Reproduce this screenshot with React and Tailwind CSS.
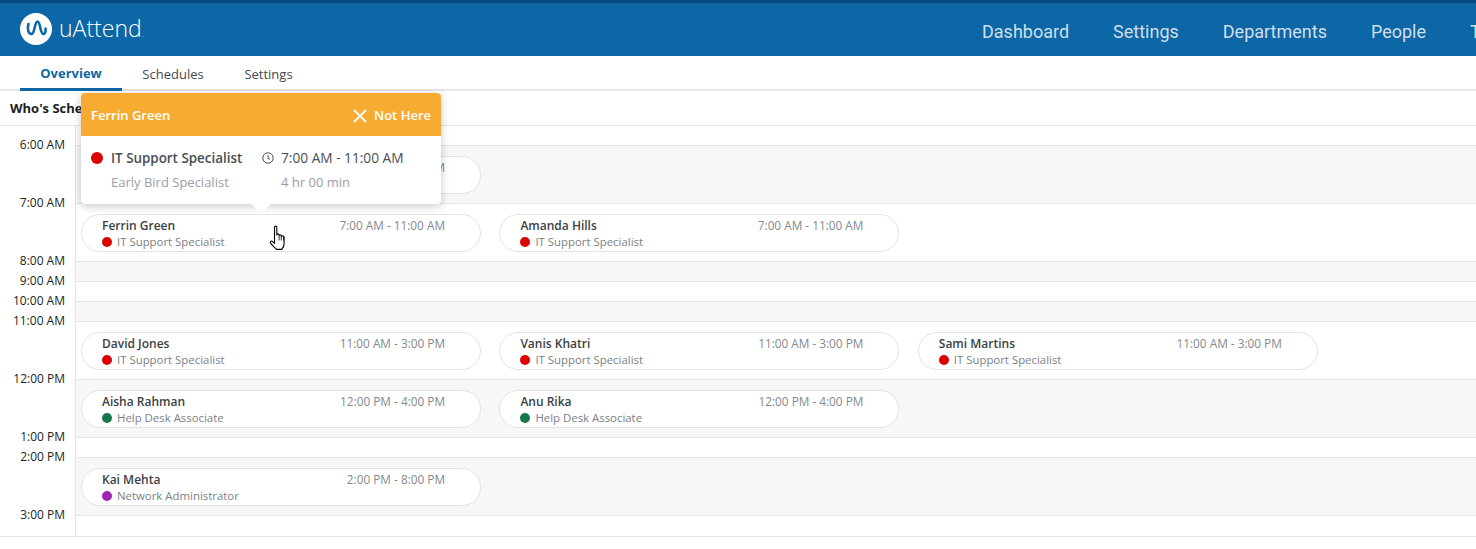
const sans = "font-['Open_Sans',sans-serif]";

const Card = ({ name, time, role, dot }) => (
  <div className="w-[400px] h-[38px] shrink-0 rounded-[19px] border border-[#e2e3e6] bg-white pl-5 pr-[35px] pt-[2px] flex justify-between">
    <div>
      <div className="text-[12px] leading-[18px] text-[#3b3f46] font-[550]">{name}</div>
      <div className="flex items-center gap-[5px] text-[11.400px] leading-[14px] text-[#7c7f86]">
        <span className={"w-[10px] h-[10px] rounded-full " + dot} />
        {role}
      </div>
    </div>
    <div className="text-[11.800px] leading-[16px] text-[#85888e]">{time}</div>
  </div>
);

const Row = ({ h, gray, cards = [] }) => (
  <div className={"border-b border-[#e4e5e7] px-[5px] pt-[10px] flex gap-[18.400px] " + h + " " + (gray ? "bg-[#f7f7f9]" : "bg-white")}>
    {cards.map((c) => <Card key={c.name} {...c} />)}
  </div>
);

const red = "bg-[#dd0000]";
const green = "bg-[#16794a]";
const purple = "bg-[#9c27b0]";
const IT = "IT Support Specialist";

const labels = [
  ["6:00 AM", "h-[58px]"], ["7:00 AM", "h-[58px]"], ["8:00 AM", "h-[20px]"], ["9:00 AM", "h-[20px]"],
  ["10:00 AM", "h-[20px]"], ["11:00 AM", "h-[58px]"], ["12:00 PM", "h-[58px]"], ["1:00 PM", "h-[20px]"],
  ["2:00 PM", "h-[58px]"], ["3:00 PM", "h-[20px]"],
];

export default function App() {
  return (
    <div className={"relative w-[1476px] h-[549px] overflow-hidden bg-white " + sans}>
      <header className="h-[56px] bg-[#0d66a5] border-t-[3px] border-[#02497f] flex items-start justify-between pl-[20px]">
        <div className="flex items-center gap-[7px] pt-[10px]">
          <svg width="32" height="32" viewBox="0 0 32 32">
            <circle cx="16" cy="16" r="16" fill="#fff" />
            <path d="M8.500 11C6.800 16 8.500 21 11.500 21 15 21 14.500 8.500 17.500 8.500 20.500 8.500 20 21 23.500 21 25.300 21 25.800 18.500 25.500 15.500" fill="none" stroke="#0d66a5" strokeWidth="2.600" strokeLinecap="round" />
          </svg>
          <span className="text-[23px] leading-none font-light text-white -mt-[2px]">uAttend<span className="text-[8px]">.</span></span>
        </div>
        <nav className="flex gap-[44px] pt-[16px] font-['Roboto',sans-serif] text-[18px] leading-[26px] text-[#cfdfec] whitespace-nowrap w-[494px] shrink-0 overflow-hidden">
          <span>Dashboard</span><span>Settings</span><span>Departments</span><span>People</span><span>Time</span>
        </nav>
      </header>

      <div className="h-[35px] border-b-2 border-[#e6e6e6] flex pl-[20px] text-[13px]">
        <div className="h-[35px] w-[102px] pt-[3px] flex items-center justify-center font-bold text-[#0d66a5] border-b-[3px] border-[#0d66a5]">Overview</div>
        <div className="h-[34px] w-[102px] pt-[4px] flex items-center justify-center text-[#44484e]">Schedules</div>
        <div className="h-[34px] w-[89px] pt-[4px] flex items-center justify-center text-[#44484e]">Settings</div>
      </div>

      <div className="h-[35px] border-b border-[#e4e5e7] pl-[10px] pt-[7px] text-[13px] leading-[20px] font-bold text-[#1c1e22]">Who's Scheduled</div>

      <div className="flex h-[411px] border-b border-[#e4e5e7]">
        <div className="w-[76px] shrink-0 border-r border-[#e4e5e7] pt-[9px] pr-[10px] text-right text-[12px] leading-[20px] text-[#1c1e22]">
          {labels.map(([t, h]) => <div key={t} className={h}>{t}</div>)}
        </div>
        <div className="flex-1">
          <Row h="h-[20px]" />
          <Row h="h-[58px]" gray cards={[{ name: "Ferrin Green", time: "6:00 AM - 11:00 AM", role: IT, dot: red }]} />
          <Row h="h-[58px]" cards={[
            { name: "Ferrin Green", time: "7:00 AM - 11:00 AM", role: IT, dot: red },
            { name: "Amanda Hills", time: "7:00 AM - 11:00 AM", role: IT, dot: red },
          ]} />
          <Row h="h-[20px]" gray />
          <Row h="h-[20px]" />
          <Row h="h-[20px]" gray />
          <Row h="h-[58px]" cards={[
            { name: "David Jones", time: "11:00 AM - 3:00 PM", role: IT, dot: red },
            { name: "Vanis Khatri", time: "11:00 AM - 3:00 PM", role: IT, dot: red },
            { name: "Sami Martins", time: "11:00 AM - 3:00 PM", role: IT, dot: red },
          ]} />
          <Row h="h-[58px]" gray cards={[
            { name: "Aisha Rahman", time: "12:00 PM - 4:00 PM", role: "Help Desk Associate", dot: green },
            { name: "Anu Rika", time: "12:00 PM - 4:00 PM", role: "Help Desk Associate", dot: green },
          ]} />
          <Row h="h-[20px]" />
          <Row h="h-[58px]" gray cards={[{ name: "Kai Mehta", time: "2:00 PM - 8:00 PM", role: "Network Administrator", dot: purple }]} />
        </div>
      </div>

      {/* popover */}
      <div className="absolute left-[81px] top-[93px] w-[360px] h-[111px] rounded-[4px] bg-white shadow-[0_2px_10px_rgba(0,0,0,0.22)]">
        <div className="h-[43px] pt-[2px] rounded-t-[4px] bg-[#f7ab31] flex items-center justify-between px-[10px] text-white text-[13px] font-semibold">
          <span>Ferrin Green</span>
          <span className="flex items-center gap-[7px]">
            <svg width="14" height="14" viewBox="0 0 14 14"><path d="M1 1l12 12M13 1L1 13" stroke="#fff" strokeWidth="1.800" /></svg>
            Not Here
          </span>
        </div>
        <div className="flex pl-[10px] pt-[12px]">
          <div className="w-[171px]">
            <div className="flex items-center gap-[8px] text-[13.400px] leading-[20px] font-[550] text-[#4a4e55]">
              <span className="w-[12px] h-[12px] rounded-full bg-[#dd0000]" />IT Support Specialist
            </div>
            <div className="pl-[20px] pt-[4px] text-[13px] leading-[20px] text-[#9a9da5]">Early Bird Specialist</div>
          </div>
          <div>
            <div className="flex items-center gap-[7px] text-[13.700px] leading-[20px] text-[#4a4e55]">
              <svg width="12" height="12" viewBox="0 0 12 12" fill="none" stroke="#4a4e55" strokeWidth="1"><circle cx="6" cy="6" r="5.200" /><path d="M6 3v3.300l2 1" /></svg>
              7:00 AM - 11:00 AM
            </div>
            <div className="pl-[19px] pt-[4px] text-[13px] leading-[20px] text-[#9a9da5]">4 hr 00 min</div>
          </div>
        </div>
        <div className="absolute left-[170px] top-[111px] w-0 h-0 border-x-[10px] border-x-transparent border-t-[9px] border-t-white" />
      </div>

      {/* cursor */}
      <svg className="absolute left-[269px] top-[225px]" width="20" height="26" viewBox="0 0 20 26">
        <path d="M5.500 2.200c0-1.500 2.300-1.500 2.300 0V10c.1-1.500 2.200-1.500 2.300 0v.8c.1-1.400 2.100-1.400 2.200 0v.9c.2-1.300 2.800-1.200 2.800.2v6.500c0 2.800-1.300 4.800-2.300 6H7.500c-1.200-1.300-4.400-4.200-5.600-5.700-1.500-1.900.2-3.300 1.500-2.300l2.100 2z" fill="#fff" stroke="#000" strokeWidth="1.100" strokeLinejoin="round" />
        <path d="M10.100 11v4.500M12.300 11.500v4M14.500 12v3.500" stroke="#000" strokeWidth="0.800" />
      </svg>
    </div>
  );
}
